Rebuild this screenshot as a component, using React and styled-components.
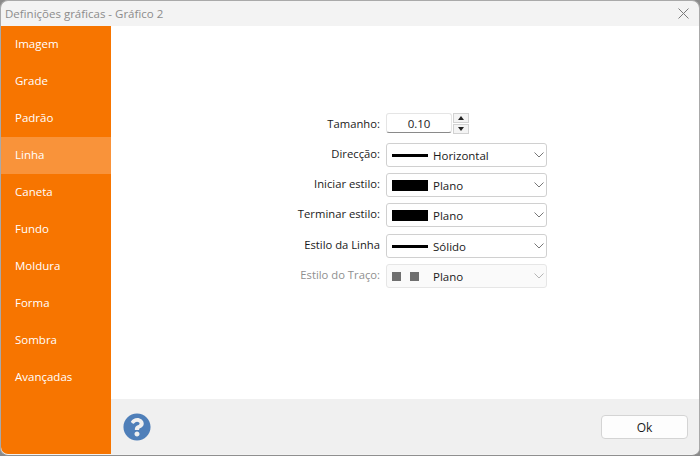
import React from 'react';
import styled, { createGlobalStyle } from 'styled-components';
import { FaQuestionCircle } from 'react-icons/fa';

const GlobalStyle = createGlobalStyle`
  html, body {
    margin: 0;
    padding: 0;
    background: #8a8a8a;
  }
`;

const Dialog = styled.div`
  box-sizing: border-box;
  width: 700px;
  height: 456px;
  padding: 0 0 1px 0;
  display: flex;
  flex-direction: column;
  background: #f3f3f3;
  border-radius: 8px;
  border: 1px solid #a9a9a9;
  border-bottom-color: #8f8f8f;
  overflow: hidden;
  font-family: 'Open Sans', 'Noto Sans', sans-serif;
  font-size: 11.5px;
  color: #1a1a1a;
`;

const TitleBar = styled.div`
  height: 25px;
  flex: none;
  display: flex;
  align-items: center;
  justify-content: space-between;
  padding: 0 10px 0 4px;
  color: #8c8c8c;
`;

const Body = styled.div`
  flex: 1;
  min-height: 0;
  display: flex;
`;

const Sidebar = styled.nav`
  width: 110px;
  flex: none;
  background: #f77500;
  border-bottom-left-radius: 7px;
`;

const NavItem = styled.div`
  box-sizing: border-box;
  height: 37px;
  display: flex;
  align-items: center;
  padding: 0 0 2px 14px;
  color: #fff;
  background: ${p => (p.$active ? '#f9933a' : 'transparent')};
`;

const Content = styled.div`
  flex: 1;
  min-width: 0;
  display: flex;
  flex-direction: column;
`;

const Main = styled.main`
  flex: 1;
  background: #fff;
  padding: 85px 0 0 179px;
`;

const Row = styled.div`
  display: flex;
  align-items: center;
  height: 24px;
  margin-bottom: ${p => (p.$gap === undefined ? 6 : p.$gap)}px;
`;

const Label = styled.label`
  width: 90px;
  margin-right: 6px;
  text-align: right;
  white-space: nowrap;
  font-size: 11.25px;
  position: relative;
  top: ${p => (p.$top === undefined ? -2 : p.$top)}px;
  color: ${p => (p.$disabled ? '#8f8f8f' : '#1a1a1a')};
`;

const NumberBox = styled.div`
  box-sizing: border-box;
  width: 66px;
  height: 20px;
  padding-top: 1px;
  display: flex;
  align-items: center;
  justify-content: center;
  border: 1px solid #e5e5e5;
  border-bottom: 1px solid #8a8a8a;
  border-radius: 3px;
`;

const Stepper = styled.div`
  margin-left: 1px;
  display: flex;
  flex-direction: column;
  gap: 1px;
`;

const StepButton = styled.div`
  box-sizing: border-box;
  width: 16px;
  height: 10px;
  display: flex;
  align-items: center;
  justify-content: center;
  background: #f4f4f4;
  border: 1px solid #d2d2d2;
`;

const Select = styled.div`
  box-sizing: border-box;
  width: 161px;
  height: 24px;
  display: flex;
  align-items: center;
  padding: 0 2px 0 5px;
  border: 1px solid ${p => (p.$disabled ? '#e6e6e6' : '#d0d0d0')};
  border-radius: 3px;
  background: ${p => (p.$disabled ? '#fafafa' : '#fff')};
  color: #1a1a1a;
`;

const Swatch = styled.div`
  width: 36px;
  height: ${p => (p.$thick ? 11 : 3)}px;
  flex: none;
  background: #000;
  margin-right: 5px;
`;

const DashSwatch = styled.div`
  width: 36px;
  flex: none;
  margin-right: 5px;
  display: flex;
  gap: 9px;
`;

const Dash = styled.span`
  width: 9px;
  height: 9px;
  background: #6f6f6f;
`;

const SelectText = styled.span`
  flex: 1;
  padding-top: 1px;
`;

const Footer = styled.footer`
  height: 55px;
  flex: none;
  background: #f0f0f0;
  display: flex;
  align-items: center;
  justify-content: space-between;
  padding: 0 11px 0 12px;
`;

const HelpIcon = styled(FaQuestionCircle)`
  width: 28px;
  height: 28px;
  color: #4f7fb9;
`;

const OkButton = styled.button`
  box-sizing: border-box;
  width: 87px;
  height: 24px;
  margin-top: 1px;
  padding: 0;
  background: #fdfdfd;
  border: 1px solid #d4d4d4;
  border-radius: 4px;
  font: inherit;
  font-size: 12px;
  color: #1a1a1a;
`;

const Chevron = ({ color = '#777' }) => (
  <svg width="10" height="6" viewBox="0 0 10 6" fill="none">
    <path d="M0.5 0.5L5 5L9.5 0.5" stroke={color} strokeWidth="1" />
  </svg>
);

const Arrow = ({ down }) => (
  <svg width="6" height="4" viewBox="0 0 6 4">
    <path d={down ? 'M0 0H6L3 4Z' : 'M0 4H6L3 0Z'} fill="#222" />
  </svg>
);

const navItems = ['Imagem', 'Grade', 'Padrão', 'Linha', 'Caneta', 'Fundo', 'Moldura', 'Forma', 'Sombra', 'Avançadas'];

const selects = [
  { label: 'Direcção:', value: 'Horizontal' },
  { label: 'Iniciar estilo:', value: 'Plano', thick: true },
  { label: 'Terminar estilo:', value: 'Plano', thick: true, gap: 7 },
  { label: 'Estilo da Linha', value: 'Sólido' },
];

const App = () => (
  <>
    <GlobalStyle />
    <Dialog>
      <TitleBar>
        Definições gráficas - Gráfico 2
        <svg width="11" height="11" viewBox="0 0 11 11" fill="none">
          <path d="M0.5 0.5L10.5 10.5M10.5 0.5L0.5 10.5" stroke="#7a7a7a" strokeWidth="1" />
        </svg>
      </TitleBar>
      <Body>
        <Sidebar>
          {navItems.map(item => (
            <NavItem key={item} $active={item === 'Linha'}>{item}</NavItem>
          ))}
        </Sidebar>
        <Content>
          <Main>
            <Row $gap={8}>
              <Label $top={0}>Tamanho:</Label>
              <NumberBox>0.10</NumberBox>
              <Stepper>
                <StepButton><Arrow /></StepButton>
                <StepButton><Arrow down /></StepButton>
              </Stepper>
            </Row>
            {selects.map(s => (
              <Row key={s.label} $gap={s.gap}>
                <Label>{s.label}</Label>
                <Select>
                  <Swatch $thick={s.thick} />
                  <SelectText>{s.value}</SelectText>
                  <Chevron />
                </Select>
              </Row>
            ))}
            <Row>
              <Label $disabled>Estilo do Traço:</Label>
              <Select $disabled>
                <DashSwatch><Dash /><Dash /></DashSwatch>
                <SelectText>Plano</SelectText>
                <Chevron color="#b5b5b5" />
              </Select>
            </Row>
          </Main>
          <Footer>
            <HelpIcon />
            <OkButton>Ok</OkButton>
          </Footer>
        </Content>
      </Body>
    </Dialog>
  </>
);

export default App;
